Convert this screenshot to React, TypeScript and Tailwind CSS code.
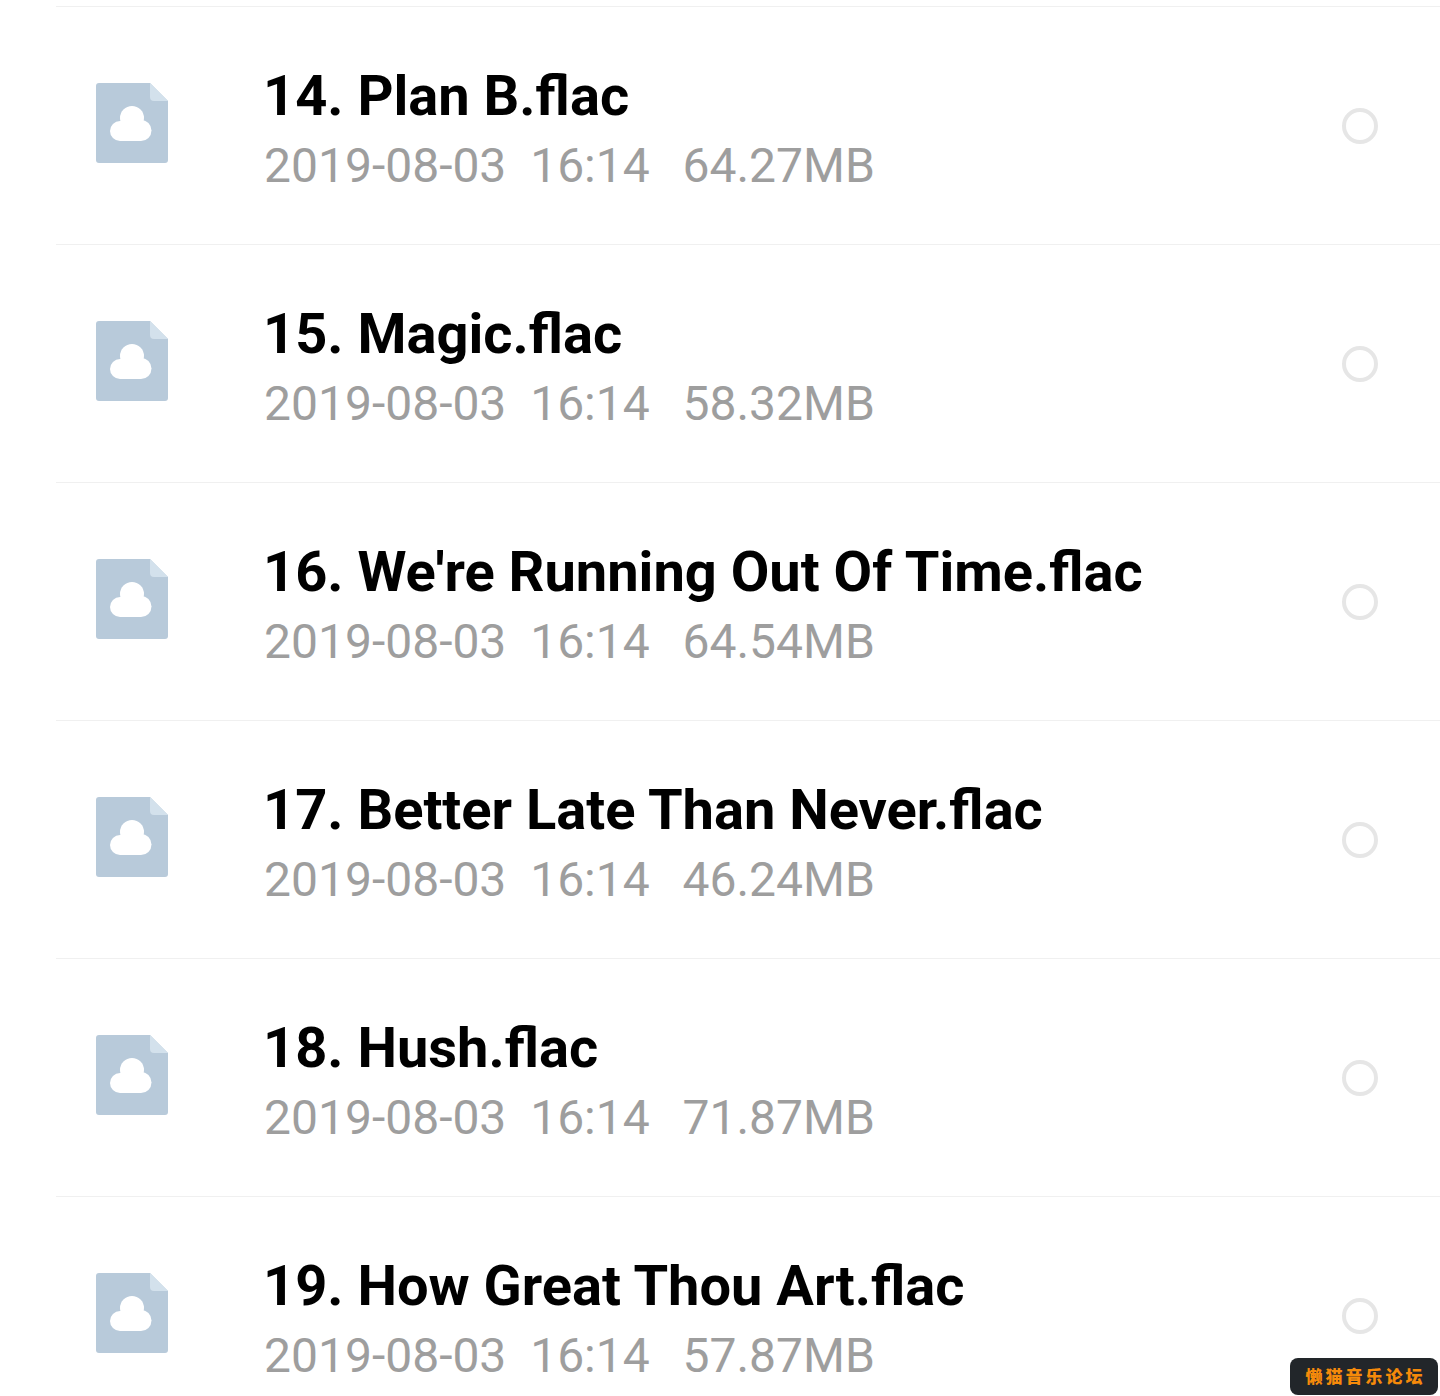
const rows = [
  ["14. Plan B.flac", "64.27MB"],
  ["15. Magic.flac", "58.32MB"],
  ["16. We're Running Out Of Time.flac", "64.54MB"],
  ["17. Better Late Than Never.flac", "46.24MB"],
  ["18. Hush.flac", "71.87MB"],
  ["19. How Great Thou Art.flac", "57.87MB"],
];

function FileIcon() {
  return (
    <svg width="72" height="80" viewBox="0 0 72 80" className="mb-[6px] shrink-0">
      <path d="M3 0H54L72 18V77a3 3 0 0 1-3 3H3a3 3 0 0 1-3-3V3a3 3 0 0 1 3-3Z" fill="#b8cada" />
      <path d="M54 0L72 18H58a4 4 0 0 1-4-4Z" fill="#d3e1ec" />
      <g fill="#ffffff">
        <circle cx="24" cy="48" r="10" />
        <circle cx="36" cy="35" r="12" />
        <circle cx="45" cy="47.500" r="10.500" />
        <rect x="24" y="38" width="21" height="20" />
      </g>
    </svg>
  );
}

export default function App() {
  return (
    <div className="relative h-[1396px] w-[1440px] overflow-hidden bg-white font-['Roboto',sans-serif]">
      <div className="pl-[56px]">
        <div className="h-[7px] border-b border-[#f0f0f0]" />
        {rows.map(([name, size]) => (
          <div key={name} className="flex h-[238px] items-center border-b border-[#f0f0f0] pl-[40px] pr-[62px]">
            <FileIcon />
            <div className="ml-[96px] flex-1 pt-[10px]">
              <div className="-ml-[1px] text-[56px] font-bold leading-[60px] text-black">{name}</div>
              <div className="mt-[10px] whitespace-pre text-[48px] leading-[60px] text-[#9e9e9e]">
                {"2019-08-03  16:14  "}
                <span className="ml-[9px]">{size}</span>
              </div>
            </div>
            <div className="h-[36px] w-[36px] rounded-full border-[4px] border-[#e6e6e6]" />
          </div>
        ))}
      </div>
      <div className="absolute bottom-[1px] right-[2px] flex h-[37px] w-[148px] items-center justify-center rounded-[8px] bg-[#22262a] pb-[2px] pl-[3px] font-['Noto_Sans_CJK_SC',sans-serif] text-[17px] font-black tracking-[3px] text-[#f58a0a]">
        懒猫音乐论坛
      </div>
    </div>
  );
}
